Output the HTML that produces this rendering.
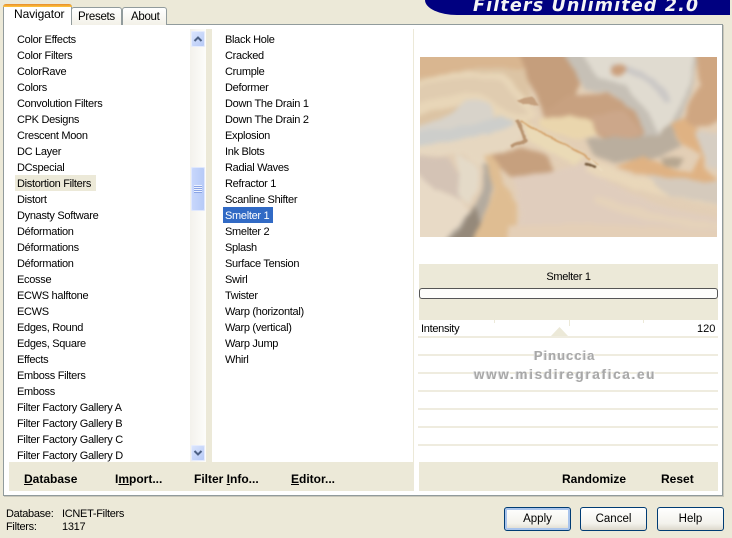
<!DOCTYPE html>
<html><head><meta charset="utf-8">
<style>
html,body{margin:0;padding:0}
body{width:732px;height:538px;background:#ece9d8;position:relative;overflow:hidden;font-family:"Liberation Sans",sans-serif;font-size:11px;color:#000}
.a{position:absolute}
.t{position:absolute;white-space:nowrap;line-height:16px;height:16px;letter-spacing:-.3px;transform:translateY(1px)}
.b{position:absolute;white-space:nowrap;font-weight:bold;font-size:12px;line-height:16px;top:471px}
.btn{position:absolute;top:507px;width:65px;height:22px;border:1px solid #003c74;border-radius:3px;background:linear-gradient(#fff,#f3f2ec 70%,#dcd8cc);text-align:center;line-height:22px;font-size:11.5px}
.ln{position:absolute;left:418px;width:300px;height:2px;background:#efecdf}
</style></head><body>

<!-- logo -->
<div class="a" style="left:425px;top:0;width:305px;height:15px;background:#000080;border-bottom-left-radius:32px 15px;overflow:hidden">
<div class="a" style="left:48px;top:-4px;white-space:nowrap;color:#f4f4f4;font:italic bold 17.5px 'DejaVu Sans',sans-serif;line-height:20px;letter-spacing:1.15px">Filters Unlimited 2.0</div>
</div>

<!-- tab panel -->
<div class="a" style="left:3px;top:24px;width:718px;height:470px;background:#fff;border:1px solid #919b9c;box-shadow:1px 1px 0 #c9c7ba"></div>

<!-- tabs -->
<div class="a" style="left:71px;top:7px;width:49px;height:17px;background:linear-gradient(#fff,#f3f1e8);border:1px solid #919b9c;border-bottom:0;border-radius:3px 3px 0 0"></div>
<div class="a" style="left:122px;top:7px;width:43px;height:17px;background:linear-gradient(#fff,#f3f1e8);border:1px solid #919b9c;border-bottom:0;border-radius:3px 3px 0 0"></div>
<div class="a" style="left:3px;top:4px;width:67px;height:21px;background:#fff;border:1px solid #919b9c;border-bottom:0;border-top:0;border-radius:3px 3px 0 0"></div>
<div class="a" style="left:3px;top:4px;width:69px;height:3px;background:linear-gradient(#e68b2c,#ffc73c);border-radius:3px 3px 0 0"></div>
<div class="t" style="left:14px;top:5px;font-size:12px;letter-spacing:-.1px">Navigator</div>
<div class="t" style="left:78px;top:8px;font-size:11.5px">Presets</div>
<div class="t" style="left:131px;top:8px;font-size:11.5px">About</div>

<!-- gutter between lists -->
<div class="a" style="left:206px;top:29px;width:6px;height:433px;background:#ece9d8"></div>
<div class="a" style="left:413px;top:29px;width:1px;height:462px;background:#ece9d8"></div>

<!-- scrollbar -->
<div class="a" style="left:190px;top:29px;width:16px;height:433px;background:linear-gradient(90deg,#f3f1ec,#fdfdfa)"></div>
<div class="a" style="left:191px;top:31px;width:14px;height:16px;background:linear-gradient(135deg,#dce6fd,#b4c8f6);border-radius:2px;box-shadow:inset 0 0 0 1px #e6ecfd"></div>
<svg class="a" style="left:191px;top:31px" width="14" height="16"><path d="M3.500 10 L7 6.500 L10.500 10" fill="none" stroke="#4d6185" stroke-width="2"/></svg>
<div class="a" style="left:191px;top:167px;width:14px;height:44px;background:linear-gradient(90deg,#c9d8fc,#b5c9f7);border-radius:2px;box-shadow:inset 0 0 0 1px #e0e8fd"></div>
<div class="a" style="left:194px;top:185px;width:8px;height:8px;background:repeating-linear-gradient(#edf2fe 0 1px,#8aa4e6 1px 2px)"></div>
<div class="a" style="left:191px;top:445px;width:14px;height:16px;background:linear-gradient(135deg,#dce6fd,#b4c8f6);border-radius:2px;box-shadow:inset 0 0 0 1px #e6ecfd"></div>
<svg class="a" style="left:191px;top:445px" width="14" height="16"><path d="M3.500 6 L7 9.500 L10.500 6" fill="none" stroke="#4d6185" stroke-width="2"/></svg>

<!-- left list -->
<div class="a" style="left:15px;top:175px;width:81px;height:16px;background:#ece9d8"></div>
<div class="t" style="left:17px;top:31px">Color Effects</div>
<div class="t" style="left:17px;top:47px">Color Filters</div>
<div class="t" style="left:17px;top:63px">ColorRave</div>
<div class="t" style="left:17px;top:79px">Colors</div>
<div class="t" style="left:17px;top:95px">Convolution Filters</div>
<div class="t" style="left:17px;top:111px">CPK Designs</div>
<div class="t" style="left:17px;top:127px">Crescent Moon</div>
<div class="t" style="left:17px;top:143px">DC Layer</div>
<div class="t" style="left:17px;top:159px">DCspecial</div>
<div class="t" style="left:17px;top:175px">Distortion Filters</div>
<div class="t" style="left:17px;top:191px">Distort</div>
<div class="t" style="left:17px;top:207px">Dynasty Software</div>
<div class="t" style="left:17px;top:223px">Déformation</div>
<div class="t" style="left:17px;top:239px">Déformations</div>
<div class="t" style="left:17px;top:255px">Déformation</div>
<div class="t" style="left:17px;top:271px">Ecosse</div>
<div class="t" style="left:17px;top:287px">ECWS halftone</div>
<div class="t" style="left:17px;top:303px">ECWS</div>
<div class="t" style="left:17px;top:319px">Edges, Round</div>
<div class="t" style="left:17px;top:335px">Edges, Square</div>
<div class="t" style="left:17px;top:351px">Effects</div>
<div class="t" style="left:17px;top:367px">Emboss Filters</div>
<div class="t" style="left:17px;top:383px">Emboss</div>
<div class="t" style="left:17px;top:399px">Filter Factory Gallery A</div>
<div class="t" style="left:17px;top:415px">Filter Factory Gallery B</div>
<div class="t" style="left:17px;top:431px">Filter Factory Gallery C</div>
<div class="t" style="left:17px;top:447px">Filter Factory Gallery D</div>

<!-- middle list -->
<div class="a" style="left:223px;top:207px;width:50px;height:16px;background:#316ac5"></div>
<div class="t" style="left:225px;top:31px">Black Hole</div>
<div class="t" style="left:225px;top:47px">Cracked</div>
<div class="t" style="left:225px;top:63px">Crumple</div>
<div class="t" style="left:225px;top:79px">Deformer</div>
<div class="t" style="left:225px;top:95px">Down The Drain 1</div>
<div class="t" style="left:225px;top:111px">Down The Drain 2</div>
<div class="t" style="left:225px;top:127px">Explosion</div>
<div class="t" style="left:225px;top:143px">Ink Blots</div>
<div class="t" style="left:225px;top:159px">Radial Waves</div>
<div class="t" style="left:225px;top:175px">Refractor 1</div>
<div class="t" style="left:225px;top:191px">Scanline Shifter</div>
<div class="t" style="left:225px;top:207px;color:#fff">Smelter 1</div>
<div class="t" style="left:225px;top:223px">Smelter 2</div>
<div class="t" style="left:225px;top:239px">Splash</div>
<div class="t" style="left:225px;top:255px">Surface Tension</div>
<div class="t" style="left:225px;top:271px">Swirl</div>
<div class="t" style="left:225px;top:287px">Twister</div>
<div class="t" style="left:225px;top:303px">Warp (horizontal)</div>
<div class="t" style="left:225px;top:319px">Warp (vertical)</div>
<div class="t" style="left:225px;top:335px">Warp Jump</div>
<div class="t" style="left:225px;top:351px">Whirl</div>

<!-- preview -->
<svg class="a" style="left:420px;top:57px" width="297" height="180" viewBox="0 2 297 180" preserveAspectRatio="none">
<defs>
<filter id="m" x="-5%" y="-5%" width="110%" height="110%" color-interpolation-filters="sRGB">
<feTurbulence type="fractalNoise" baseFrequency="0.055" numOctaves="3" seed="4" result="n"/>
<feDisplacementMap in="SourceGraphic" in2="n" scale="5" xChannelSelector="R" yChannelSelector="G"/>
<feGaussianBlur stdDeviation="2.400"/>
</filter>
<filter id="s" x="-5%" y="-5%" width="110%" height="110%" color-interpolation-filters="sRGB">
<feTurbulence type="fractalNoise" baseFrequency="0.08" numOctaves="2" seed="9" result="n"/>
<feDisplacementMap in="SourceGraphic" in2="n" scale="4" xChannelSelector="R" yChannelSelector="G"/>
<feGaussianBlur stdDeviation="0.8"/>
</filter>
<clipPath id="c"><rect x="0" y="0" width="297" height="185"/></clipPath>
</defs>
<g clip-path="url(#c)">
<rect x="-5" y="-5" width="310" height="195" fill="#e3cfb6"/>
<g filter="url(#m)">
<path d="M-8 -8 H110 V70 L0 90 H-8Z" fill="#dcc4a4"/>
<path d="M-8 -8 H105 L115 15 L60 12 L20 20 L-8 25Z" fill="#d9b690"/>
<path d="M-8 30 C20 16 55 14 85 20 C100 35 110 50 118 60 C105 72 90 68 70 58 C50 45 30 50 -8 62Z" fill="#e8d6b8"/>
<path d="M-8 34 C20 22 50 20 80 26 C95 40 100 50 108 58 C90 62 78 50 60 38 C40 36 15 42 -8 52Z" fill="#e0ccb0"/>
<path d="M95 -8 H150 L160 30 L150 50 L125 62 L118 45 L108 22Z" fill="#c59e7c"/>
<path d="M140 -8 H280 L272 35 L258 65 L245 95 L200 100 L215 58 L190 38 L165 35 Z" fill="#c6c0b6"/>
<path d="M158 -8 H276 L270 30 L256 58 L240 82 L228 58 L205 30 L178 22Z" fill="#e0dbd0"/>
<path d="M190 12 C215 14 238 25 248 48" stroke="#cbc8c6" stroke-width="7" fill="none"/>
<path d="M275 -8 H305 V62 L285 72 L260 72 L270 45 L280 30Z" fill="#cfa681"/>
<path d="M125 55 L150 40 L188 38 L215 55 L224 78 L215 86 L190 85 L170 78 L125 62Z" fill="#c8a180"/>
<path d="M170 60 L205 55 L222 78 L200 85 L178 78Z" fill="#cca78a"/>
<path d="M120 64 L150 60 L172 66 L176 80 L160 84 L135 78 L120 72Z" fill="#ead6ad"/>
<path d="M45 45 C60 40 72 48 76 62 C66 72 40 72 -8 80 V72 C15 68 35 60 45 45Z" fill="#d8d3ca"/>
<path d="M-8 78 C30 72 60 72 82 60 C92 64 96 66 92 72 C70 80 40 85 -8 92Z" fill="#cdcecb"/>
<path d="M-8 92 C40 85 75 80 96 68 L105 78 C95 90 75 105 60 112 L45 100 L-8 100Z" fill="#e6d7c0"/>
<path d="M-8 100 L28 102 L44 130 L42 145 L15 133 L-8 115Z" fill="#d4c3b5"/>
<path d="M-8 115 L15 133 L42 145 L52 160 L35 190 H-8Z" fill="#e8dac6"/>
<path d="M36 100 C55 105 62 115 58 130 L50 150 L40 140 Z" fill="#e4dac8"/>
<path d="M62 108 C66 125 60 145 48 160 L22 190 H56 L62 165 L72 135 L70 110Z" fill="#b3aa9e"/>
<path d="M40 175 L55 152 L60 170 L50 190 H25Z" fill="#95897a"/>
<path d="M64 100 L78 98 L84 130 L98 150 L95 190 L50 190 L62 165 L74 135Z" fill="#dfbd92"/>
<path d="M72 100 L100 92 L128 102 L136 118 L115 130 L92 122 L80 112Z" fill="#c6a07e"/>
<path d="M92 122 L135 115 L165 108 L190 128 L240 150 L305 165 V190 H85 L102 160Z" fill="#e0cdbd"/>
<path d="M165 115 C195 128 235 142 305 152 V140 C260 132 210 125 175 105Z" fill="#e9d7ba"/>
<path d="M175 140 C220 155 260 165 305 168 V176 C250 175 205 160 175 148Z" fill="#e5d2ba"/>
<path d="M88 172 C150 166 220 170 305 178 V190 H88Z" fill="#e4cfb7"/>
<path d="M100 64 L165 100 L155 110 L112 88Z" fill="#eadab6"/>
<path d="M165 84 L238 80 L250 68 L262 90 L240 102 L192 108 L172 100Z" fill="#baae9e"/>
<path d="M195 112 L225 101 L248 112 L272 118 L280 100 L262 88 L250 68 L262 62 L278 75 L285 115 L297 125 L280 135 L245 125 L215 118Z" fill="#dfb283"/>
<path d="M275 78 H305 V115 L288 112Z" fill="#d6cec3"/>
<path d="M240 103 L262 103 L259 112 L245 112Z" fill="#b6a690"/>
<path d="M225 120 L305 128 V150 L250 142Z" fill="#d5cabc"/>
<ellipse cx="198" cy="15" rx="8" ry="6" fill="#cb9f7c"/>
</g>
<g filter="url(#s)">
<path d="M100 66 L125 80 L165 100 L178 110" stroke="#d4a36c" stroke-width="1.800" fill="none"/>
<path d="M97 65 L106 85 L92 92" stroke="#b99470" stroke-width="3" fill="none"/>
<path d="M165 108 L176 112" stroke="#7a5f42" stroke-width="3" fill="none"/>
<path d="M170 104 L183 116" stroke="#ecdcc0" stroke-width="2" fill="none"/>
<path d="M96 45 L112 42 L118 50 L104 50Z" fill="#c5a07e"/>
</g>
</g>
</svg>

<!-- parameter area -->
<div class="a" style="left:419px;top:264px;width:299px;height:56px;background:#ece9d8"></div>
<div class="t" style="left:419px;top:268px;width:299px;text-align:center">Smelter 1</div>
<div class="a" style="left:419px;top:288px;width:297px;height:9px;border:1px solid #555;border-radius:3px;background:#fdfdfb"></div>
<div class="t" style="left:421px;top:320px">Intensity</div>
<div class="t" style="left:697px;top:320px;letter-spacing:0">120</div>
<div class="a" style="left:494px;top:320px;width:1px;height:3px;background:#ece9d8"></div>
<div class="a" style="left:569px;top:320px;width:1px;height:6px;background:#ece9d8"></div>
<div class="a" style="left:643px;top:320px;width:1px;height:3px;background:#ece9d8"></div>
<svg class="a" style="left:550px;top:326px" width="20" height="11"><path d="M1 10 L9.500 1 L18 10Z" fill="#ece9d8"/></svg>
<div class="ln" style="top:336px"></div>
<div class="ln" style="top:354px"></div>
<div class="ln" style="top:372px"></div>
<div class="ln" style="top:390px"></div>
<div class="ln" style="top:408px"></div>
<div class="ln" style="top:426px"></div>
<div class="ln" style="top:444px"></div>

<!-- watermark -->
<div class="t" style="left:534px;top:347px;color:#a8a8a8;font-weight:bold;font-size:13px;letter-spacing:1px;text-shadow:1px 1px 0 #fff,-1px 0 0 #ddd">Pinuccia</div>
<div class="t" style="left:474px;top:366px;color:#a8a8a8;font-weight:bold;font-size:13.500px;letter-spacing:1.700px;text-shadow:1px 1px 0 #fff,-1px 0 0 #ddd">www.misdiregrafica.eu</div>

<!-- bottom bars -->
<div class="a" style="left:9px;top:462px;width:404px;height:29px;background:#ece9d8"></div>
<div class="a" style="left:419px;top:462px;width:299px;height:29px;background:#ece9d8"></div>
<div class="b" style="left:24px"><u>D</u>atabase</div>
<div class="b" style="left:115px">I<u>m</u>port...</div>
<div class="b" style="left:194px">Filter <u>I</u>nfo...</div>
<div class="b" style="left:291px"><u>E</u>ditor...</div>
<div class="b" style="left:562px">Randomize</div>
<div class="b" style="left:661px">Reset</div>

<!-- status -->
<div class="t" style="left:6px;top:505px">Database:</div>
<div class="t" style="left:62px;top:505px">ICNET-Filters</div>
<div class="t" style="left:6px;top:518px">Filters:</div>
<div class="t" style="left:62px;top:518px">1317</div>

<!-- buttons -->
<div class="btn" style="left:504px;box-shadow:inset 0 0 0 2px #a9c4ec">Apply</div>
<div class="btn" style="left:580px">Cancel</div>
<div class="btn" style="left:657px">Help</div>
</body></html>
